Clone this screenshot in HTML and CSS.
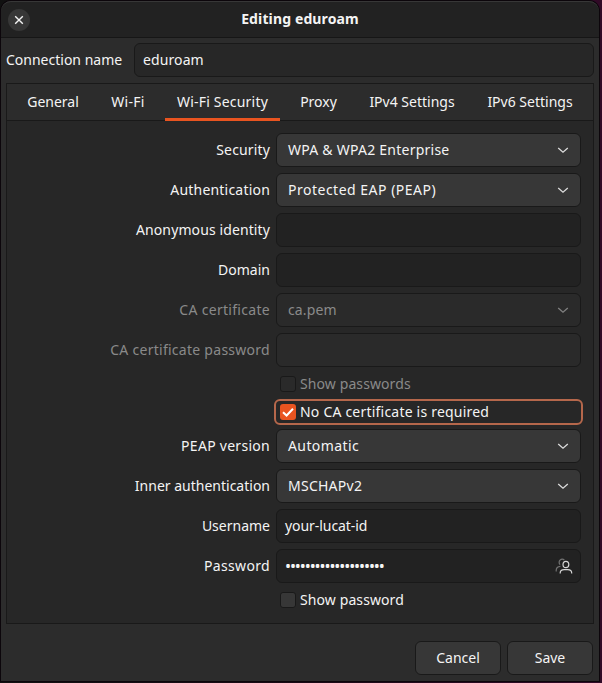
FILE: index.html
```html
<!DOCTYPE html>
<html lang="en">
<head>
<meta charset="utf-8">
<title>Editing eduroam</title>
<link rel="stylesheet" href="styles.css">
</head>
<body>
<div class="window">
  <header class="titlebar">
    <button class="close" aria-label="Close"><svg width="10" height="10" viewBox="0 0 10 10"><path d="M1.2 1.2 8.8 8.8M8.8 1.2 1.2 8.8"/></svg></button>
    <h1><span class="t-title">Editing eduroam</span></h1>
  </header>
  <div class="connection">
    <label><span class="t-conn">Connection name</span></label>
    <div class="entry name"><span class="t-eduroam">eduroam</span></div>
  </div>
  <main class="notebook">
    <nav class="tabs">
      <a class="tab general"><span class="t-general">General</span></a>
      <a class="tab wifi"><span class="t-wifi">Wi-Fi</span></a>
      <a class="tab security active"><span class="t-wsec">Wi-Fi Security</span></a>
      <a class="tab proxy"><span class="t-proxy">Proxy</span></a>
      <a class="tab ipv4"><span class="t-ipv4">IPv4 Settings</span></a>
      <a class="tab ipv6"><span class="t-ipv6">IPv6 Settings</span></a>
    </nav>
    <div class="form">
      <label><span class="t-security">Security</span></label>
      <div class="combo"><span class="t-wpa">WPA &amp; WPA2 Enterprise</span><svg class="chevron" width="12" height="8" viewBox="0 0 12 8"><path d="M1.2 2 6 6.200l4.8-4.200"/></svg></div>
      <label><span class="t-auth">Authentication</span></label>
      <div class="combo"><span class="t-peap">Protected EAP (PEAP)</span><svg class="chevron" width="12" height="8" viewBox="0 0 12 8"><path d="M1.2 2 6 6.200l4.8-4.200"/></svg></div>
      <label><span class="t-anon">Anonymous identity</span></label>
      <div class="entry"></div>
      <label><span class="t-domain">Domain</span></label>
      <div class="entry"></div>
      <label class="disabled"><span class="t-cacert">CA certificate</span></label>
      <div class="combo disabled"><span class="t-capem">ca.pem</span><svg class="chevron" width="12" height="8" viewBox="0 0 12 8"><path d="M1.2 2 6 6.200l4.8-4.200"/></svg></div>
      <label class="disabled"><span class="t-capass">CA certificate password</span></label>
      <div class="entry disabled"></div>
      <div class="check disabled"><i class="box"></i><span class="t-showpws">Show passwords</span></div>
      <div class="check focused"><i class="box checked"><svg width="16" height="16" viewBox="0 0 16 16"><path d="M3 8.2 6.6 11.5 13 4.8"/></svg></i><span class="t-noca">No CA certificate is required</span></div>
      <label><span class="t-pver">PEAP version</span></label>
      <div class="combo"><span class="t-automatic">Automatic</span><svg class="chevron" width="12" height="8" viewBox="0 0 12 8"><path d="M1.2 2 6 6.200l4.8-4.200"/></svg></div>
      <label><span class="t-inner">Inner authentication</span></label>
      <div class="combo"><span class="t-mschap">MSCHAPv2</span><svg class="chevron" width="12" height="8" viewBox="0 0 12 8"><path d="M1.2 2 6 6.200l4.8-4.200"/></svg></div>
      <label><span class="t-username">Username</span></label>
      <div class="entry"><span class="t-lucat">your-lucat-id</span></div>
      <label><span class="t-password">Password</span></label>
      <div class="entry secret"><span class="dots">••••••••••••••••••••</span>
        <svg class="users" width="18" height="18" viewBox="0 0 18 18"><g class="back"><path d="M9.4 3.1A3.1 3.1 0 1 0 5.1 7.6M1.2 14.5v-1.200c0-2.300 1.500-3.800 4.200-4"/></g><ellipse cx="10.9" cy="7.5" rx="2.9" ry="3.2"/><path d="M5.2 16.5v-.6c0-2 1.6-3.2 4-3.2h3.5c2.4 0 4 1.200 4 3.200v.6"/></svg>
      </div>
      <div class="check"><i class="box"></i><span class="t-showpw">Show password</span></div>
    </div>
  </main>
  <footer class="actions">
    <button class="button"><span class="t-cancel">Cancel</span></button>
    <button class="button"><span class="t-save">Save</span></button>
  </footer>
</div>
</body>
</html>
```
FILE: styles.css
```css
* { box-sizing: border-box; }
body {
  margin: 0;
  width: 602px;
  height: 683px;
  padding: 1px 3px 2px 1px;
  overflow: hidden;
  background: linear-gradient(90deg, #111 0, #190915 50%, #310a27 100%);
  color: #f4f4f4;
  font: 14px/20px "Noto Sans", "Open Sans", sans-serif;
}
button { font: inherit; color: inherit; padding: 0; }
span { white-space: nowrap; }
svg { fill: none; stroke: currentColor; stroke-width: 1.4; }
.window {
  width: 598px;
  height: 680px;
  background: #2c2c2c;
  border-radius: 10px 10px 0 0;
  box-shadow: 0 0 0 1px #0c060b;
}
.titlebar {
  height: 37px;
  display: grid;
  grid-template-columns: 36px 1fr 36px;
  align-items: center;
  background: #222;
  border-top: 1px solid #373737;
  border-bottom: 1px solid #161616;
  border-radius: 10px 10px 0 0;
}
.close {
  width: 22px;
  height: 22px;
  margin-left: 7px;
  display: grid;
  place-items: center;
  border: 0;
  border-radius: 50%;
  background: #373737;
}
h1 { margin: 0; padding-bottom: 2px; font-size: 14px; line-height: 20px; text-align: center; font-weight: 700; }
.connection { display: flex; align-items: center; padding: 5px 5px 6px 5px; }
.connection label { width: 128px; }
.entry, .combo {
  height: 34px;
  display: flex;
  align-items: center;
  border: 1px solid #191919;
  border-radius: 6px;
  background: #222;
  padding: 0 8px;
}
.name { flex: 1; background: #272727; }
.combo { background: #373737; padding: 0 11px; justify-content: space-between; }
.notebook {
  margin: 0 5px;
  height: 541px;
  border: 1px solid #191919;
  background: #272727;
}
.tabs {
  height: 37px;
  display: flex;
  gap: 8px;
  padding-left: 8px;
  background: #2c2c2c;
  border-bottom: 1px solid #191919;
}
.tab { height: 37px; display: flex; align-items: center; justify-content: center; padding-bottom: 2px; }
.active { border-bottom: 3px solid #e95420; padding: 1px 0 0; }
.general { width: 76px; }
.wifi { width: 58px; }
.security { width: 115px; }
.proxy { width: 61px; }
.ipv4 { width: 110px; }
.ipv6 { width: 110px; }
.form {
  display: grid;
  grid-template-columns: 263px 305px;
  column-gap: 6px;
  row-gap: 6px;
  padding-top: 12px;
}
.form label { align-self: center; text-align: right; }
.disabled { color: #8a8a8a; }
.entry.disabled, .combo.disabled { background: #2a2a2a; }
.check { grid-column: 2; height: 22px; display: flex; align-items: center; gap: 4px; padding-left: 4px; }
.focused { outline: 2px solid #b5674b; border-radius: 4px; }
.box { width: 16px; height: 16px; border: 1px solid #191919; border-radius: 3px; background: #373737; }
.disabled .box { background: #2a2a2a; }
.box.checked { border: 0; background: #e95420; }
.checked svg { display: block; stroke: #fff; stroke-width: 2; }
.chevron { stroke-width: 1.3; color: #dcdcdc; }
.disabled .chevron { color: #808080; }
.secret { justify-content: space-between; padding-right: 7px; }
.users { stroke-width: 1.2; color: #d5d5d5; }
.back { opacity: .45; }
.actions { display: flex; justify-content: flex-end; gap: 6px; padding: 17px 6px 0; }
.button { width: 86px; height: 34px; border: 1px solid #191919; border-radius: 6px; background: #373737; }
.dots { font-size: 16px; letter-spacing: -1.08px; }

/* tracking per string */
.t-title { letter-spacing: .13px; }
.t-eduroam { letter-spacing: .1px; }
.t-wifi { letter-spacing: .3px; }
.t-wsec { letter-spacing: .2px; }
.t-security { letter-spacing: .15px; }
.t-wpa { letter-spacing: .24px; }
.t-auth { letter-spacing: .2px; }
.t-peap { letter-spacing: .5px; }
.t-anon { letter-spacing: .11px; }
.t-cacert { letter-spacing: .3px; }
.t-capem { letter-spacing: .15px; }
.t-capass { letter-spacing: .27px; }
.t-showpws, .t-showpw { letter-spacing: .1px; }
.t-noca { letter-spacing: .21px; }
.t-pver { letter-spacing: .28px; }
.t-automatic { letter-spacing: .4px; }
.t-mschap { letter-spacing: .25px; }
.t-lucat { letter-spacing: -.06px; }
.t-password { letter-spacing: .33px; }
```
